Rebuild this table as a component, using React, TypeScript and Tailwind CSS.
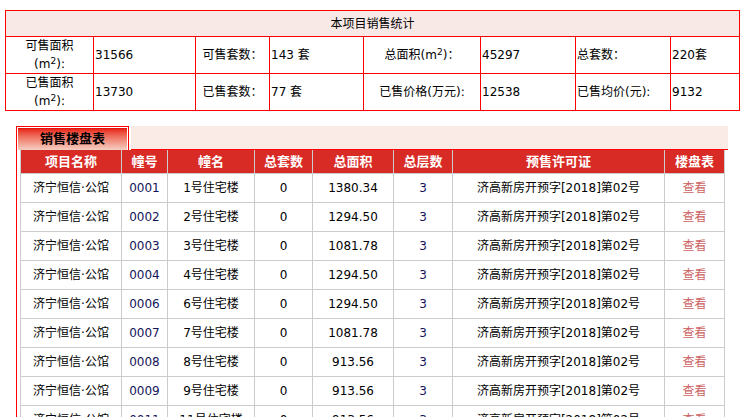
import React from 'react';

/* ── Datos ────────────────────────────────────────────────────────────────── */
const rows = [
  { no: '0001', name: '1号住宅楼', area: '1380.34' },
  { no: '0002', name: '2号住宅楼', area: '1294.50' },
  { no: '0003', name: '3号住宅楼', area: '1081.78' },
  { no: '0004', name: '4号住宅楼', area: '1294.50' },
  { no: '0006', name: '6号住宅楼', area: '1294.50' },
  { no: '0007', name: '7号住宅楼', area: '1081.78' },
  { no: '0008', name: '8号住宅楼', area: '913.56' },
  { no: '0009', name: '9号住宅楼', area: '913.56' },
  { no: '0011', name: '11号住宅楼', area: '913.56' },
  { no: '0012', name: '12号住宅楼', area: '913.56' },
];

const heads = ['项目名称', '幢号', '幢名', '总套数', '总面积', '总层数', '预售许可证', '楼盘表'];
const widths = [101, 46, 87, 58, 81, 59, 212, 60];

const M2 = () => (
  <>
    (m<sup>2</sup>)
  </>
);

/* ── Resumen ──────────────────────────────────────────────────────────────── */
function Summary() {
  const td = 'border border-[#ff0000] h-[36px] p-0 align-middle';
  return (
    <table className="ml-[5px] mt-[10px] w-[735px] table-fixed border-collapse text-[12px] text-black">
      <colgroup>
        {[88, 102, 74, 94, 117, 95, 95, 69].map((w, i) => (
          <col key={i} style={{ width: w }} />
        ))}
      </colgroup>
      <tbody>
        <tr>
          <td colSpan={8} className="border border-[#ff0000] h-[26px] bg-[#f9e9e6] text-center p-0">
            本项目销售统计
          </td>
        </tr>
        <tr>
          <td className={`${td} text-center leading-[18px]`}>
            可售面积
            <br />
            <M2 />:
          </td>
          <td className={`${td} pl-[1px]`}>31566</td>
          <td className={`${td} text-center`}>可售套数：</td>
          <td className={`${td} pl-[1px]`}>143 套</td>
          <td className={`${td} text-center`}>
            总面积<M2 />：
          </td>
          <td className={`${td} pl-[1px]`}>45297</td>
          <td className={`${td} pl-[1px]`}>总套数：</td>
          <td className={`${td} pl-[1px]`}>220套</td>
        </tr>
        <tr>
          <td className={`${td} text-center leading-[18px]`}>
            已售面积
            <br />
            <M2 />:
          </td>
          <td className={`${td} pl-[1px]`}>13730</td>
          <td className={`${td} text-center`}>已售套数：</td>
          <td className={`${td} pl-[1px]`}>77 套</td>
          <td className={`${td} text-center`}>已售价格(万元):</td>
          <td className={`${td} pl-[1px]`}>12538</td>
          <td className={`${td} pl-[1px]`}>已售均价(元):</td>
          <td className={`${td} pl-[1px]`}>9132</td>
        </tr>
      </tbody>
    </table>
  );
}

/* ── Tabla de edificios ───────────────────────────────────────────────────── */
function Buildings() {
  return (
    <div className="ml-[16px] mt-[15px] w-[712px] border-l border-[#ff0000]">
      {/* Pestaña */}
      <div className="flex h-[24px]">
        <div className="w-[113px] -ml-px border border-b-0 border-[#ff0000] p-px pb-0 bg-white">
          <div className="h-full bg-gradient-to-b from-[#e60000] via-[#f08070] to-[#f3cfc3] flex items-center justify-center font-bold text-[13px] text-black">
            销售楼盘表
          </div>
        </div>
        <div className="ml-[2px] flex-1 bg-[#faebe6] border-b border-[#ff0000]" />
      </div>

      <div className="pl-[3px]">
        <table className="w-[705px] table-fixed border-collapse text-[12px] text-black">
          <colgroup>
            {widths.map((w, i) => (
              <col key={i} style={{ width: w }} />
            ))}
          </colgroup>
          <thead>
            <tr>
              {heads.map((h) => (
                <th
                  key={h}
                  className="h-[23px] p-0 border-x border-b border-[#cccccc] bg-[#d92b26] text-white font-bold text-[13px] text-center"
                >
                  {h}
                </th>
              ))}
            </tr>
          </thead>
          <tbody>
            {rows.map((r) => (
              <tr key={r.no} className="h-[29px] text-center">
                <td className="border border-[#cccccc] p-0">济宁恒信·公馆</td>
                <td className="border border-[#cccccc] p-0 text-[#14145a]">{r.no}</td>
                <td className="border border-[#cccccc] p-0">{r.name}</td>
                <td className="border border-[#cccccc] p-0">0</td>
                <td className="border border-[#cccccc] p-0">{r.area}</td>
                <td className="border border-[#cccccc] p-0 text-[#14145a]">3</td>
                <td className="border border-[#cccccc] p-0">济高新房开预字[2018]第02号</td>
                <td className="border border-[#cccccc] p-0 text-[#cc6262]">查看</td>
              </tr>
            ))}
          </tbody>
        </table>
      </div>
    </div>
  );
}

export default function App() {
  return (
    <div
      className="w-[745px] h-[417px] overflow-hidden bg-white"
      style={{ fontFamily: '"DejaVu Sans", "Noto Sans CJK SC", sans-serif' }}
    >
      <Summary />
      <Buildings />
    </div>
  );
}
